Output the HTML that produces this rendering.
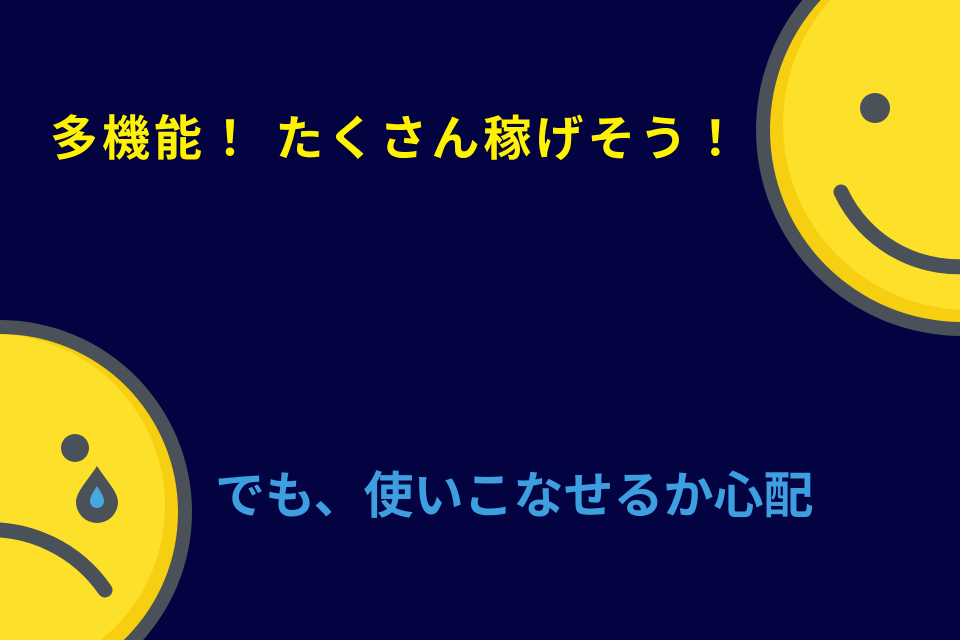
<!DOCTYPE html>
<html><head><meta charset="utf-8"><style>
html,body{margin:0;width:960px;height:640px;overflow:hidden}
body{background:#020340;position:relative;font-family:"Liberation Sans","Noto Sans CJK JP",sans-serif;font-weight:bold}
svg{position:absolute;left:0;top:0}
.t1{position:absolute;left:50px;top:110px;font-size:48px;line-height:60px;color:#fff200;white-space:nowrap;letter-spacing:4px}
.t2{position:absolute;left:215px;top:464px;font-size:50px;line-height:64px;color:#3d9ee0;white-space:nowrap}
</style></head><body>
<svg width="960" height="640">
<circle cx="962" cy="130" r="206" fill="#4a5158"/>
<circle cx="962" cy="130" r="192" fill="#f5cf10"/>
<circle cx="969" cy="124" r="186" fill="#fde02a"/>
<circle cx="875" cy="108" r="15" fill="#4a5158"/>
<path d="M841 192 A 130 130 0 0 0 980 265" stroke="#4a5158" stroke-width="15" fill="none" stroke-linecap="round"/>
<circle cx="0" cy="512" r="192" fill="#4a5158"/>
<circle cx="0" cy="512" r="178" fill="#f5cf10"/>
<circle cx="-7" cy="506" r="172" fill="#fde02a"/>
<circle cx="75" cy="448" r="14" fill="#4a5158"/>
<path d="M97 466 C 88 480 76 492 76 502 A 21 21 0 0 0 118 502 C 118 492 106 480 97 466 Z" fill="#4a5158"/>
<path d="M97 486 C 93 492 90 497 90 501 A 7 7 0 0 0 104 501 C 104 497 101 492 97 486 Z" fill="#45a8e0"/>
<path d="M-20 530 A 140 140 0 0 1 105 590" stroke="#4a5158" stroke-width="15" fill="none" stroke-linecap="round"/>
</svg>
<div class="t1">多機能！ たくさん稼げそう！</div>
<div class="t2">でも、使いこなせるか心配</div>
</body></html>
